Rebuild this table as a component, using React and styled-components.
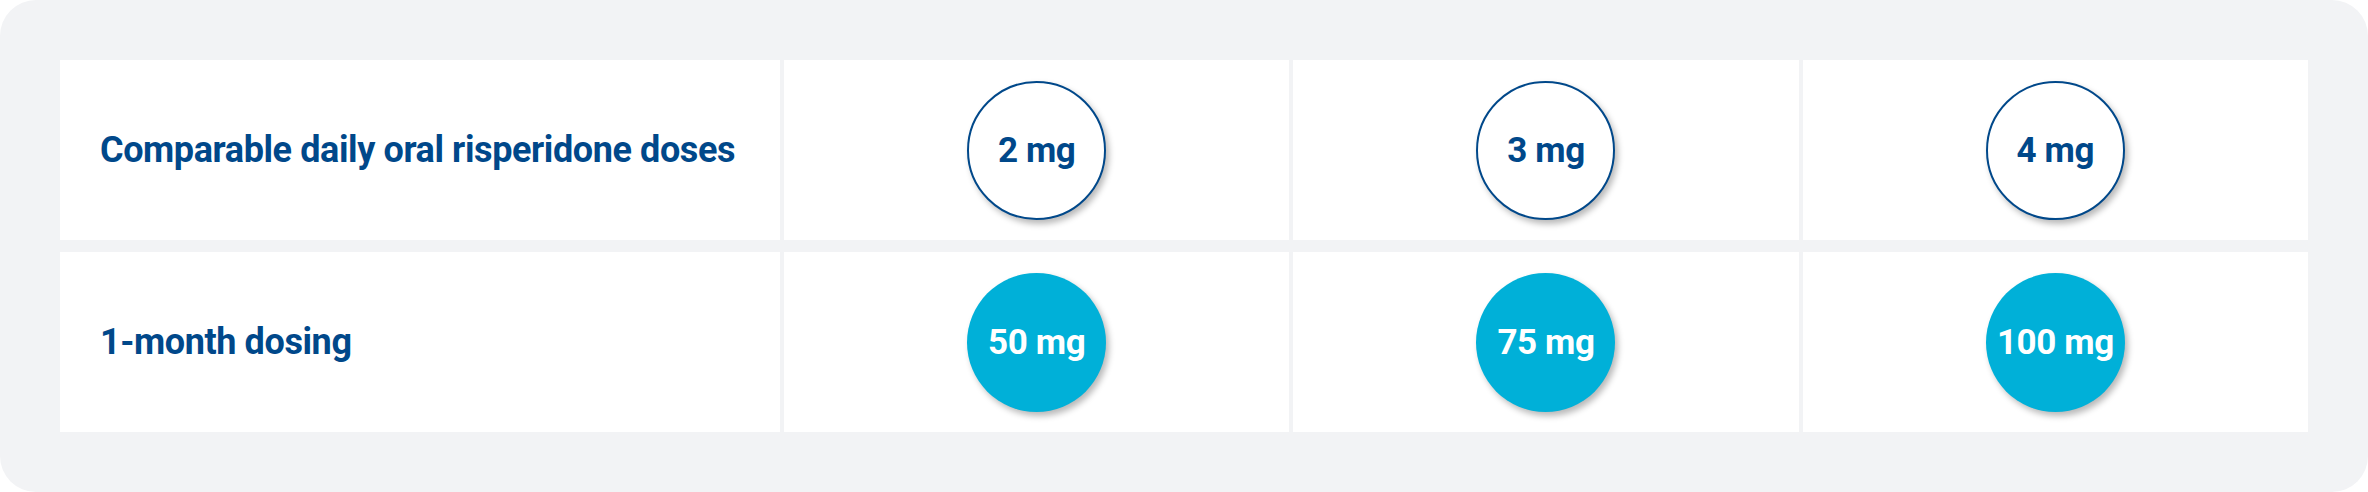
import styled, { createGlobalStyle } from "styled-components";

const GlobalStyle = createGlobalStyle`
	html, body {
		margin: 0;
		padding: 0;
		background: #ffffff;
	}
	body {
		font-family: Roboto, "Liberation Sans", sans-serif;
	}
`;

const rows = [
	{ label: "Comparable daily oral risperidone doses", doses: ["2 mg", "3 mg", "4 mg"], filled: false },
	{ label: "1-month dosing", doses: ["50 mg", "75 mg", "100 mg"], filled: true },
];

function App() {
	return (
		<>
			<GlobalStyle />
			<Panel>
				<Table>
					{rows.map((row) => (
						<Row key={row.label}>
							<LabelCell>{row.label}</LabelCell>
							{row.doses.map((dose) => (
								<DoseCell key={dose}>
									<Pill $filled={row.filled}>{dose}</Pill>
								</DoseCell>
							))}
						</Row>
					))}
				</Table>
			</Panel>
		</>
	);
}

export default App;

const Panel = styled.section`
	box-sizing: border-box;
	width: 2368px;
	height: 492px;
	padding: 60px;
	background: #f2f3f5;
	border-radius: 36px;
`;

const Table = styled.div`
	display: flex;
	flex-direction: column;
	gap: 12px;
`;

const Row = styled.div`
	display: grid;
	grid-template-columns: 720px 1fr 1fr 1fr;
	column-gap: 4px;
	height: 180px;
`;

const LabelCell = styled.div`
	display: flex;
	align-items: center;
	padding-left: 40px;
	background: #ffffff;
	color: #00488a;
	font-size: 36px;
	font-weight: 700;
	letter-spacing: -0.4px;
`;

const DoseCell = styled.div`
	display: flex;
	align-items: center;
	justify-content: center;
	background: #ffffff;
`;

const Pill = styled.div`
	box-sizing: border-box;
	width: 139px;
	height: 139px;
	border-radius: 50%;
	display: flex;
	align-items: center;
	justify-content: center;
	font-size: 35px;
	font-weight: 700;
	letter-spacing: -0.4px;
	background: ${(p) => (p.$filled ? "#00b0d8" : "#ffffff")};
	color: ${(p) => (p.$filled ? "#ffffff" : "#00488a")};
	border: ${(p) => (p.$filled ? "none" : "2px solid #00488a")};
	box-shadow: 3px 4px 6px rgba(0, 0, 0, 0.28);
`;
